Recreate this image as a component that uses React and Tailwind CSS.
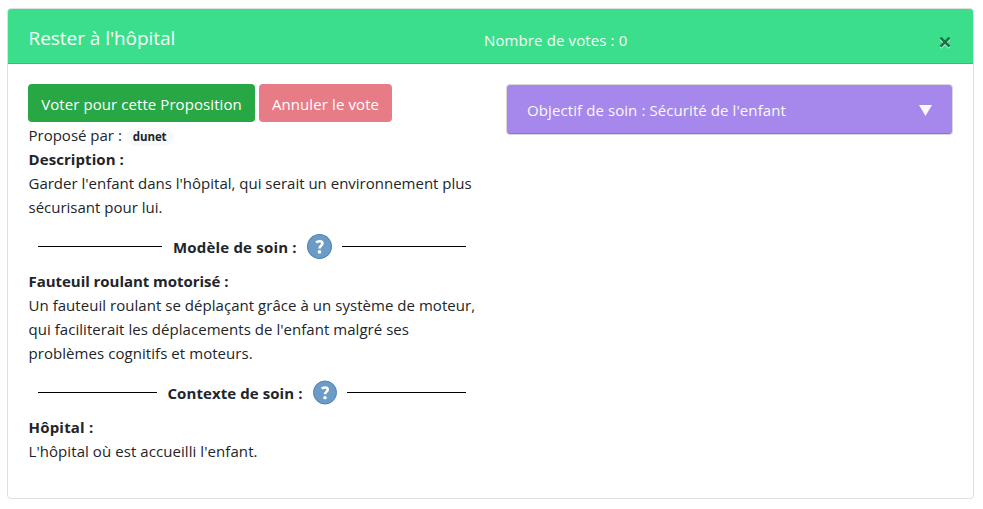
function HelpIcon({ className }) {
  return (
    <svg className={`shrink-0 ${className}`} viewBox="0 0 24 24">
      <circle cx="12" cy="12" r="11.5" fill="#6c9bc5" stroke="#4a86b8" />
      <path d="M8.7 8.2c1-1 2-1.3 3.3-1.3 1.8 0 2.8.8 2.8 2.1 0 2.4-2.8 2.1-2.8 4.8" fill="none" stroke="#fff" strokeWidth="2.5" />
      <rect x="10.4" y="15.7" width="3.2" height="3" rx="1" fill="#fff" />
    </svg>
  );
}

function Separator({ children, iconClass }) {
  return (
    <div className="flex h-[50px] items-center gap-[10px] pt-[4px] pl-[10px] pr-[9px]">
      <span className="h-px flex-1 bg-black" />
      {children}
      <HelpIcon className={iconClass} />
      <span className="h-px flex-1 bg-black" />
    </div>
  );
}

export default function App() {
  return (
    <div className="h-[509px] w-[983px] bg-white pl-[7px] pt-2 font-['Open_Sans','Noto_Sans',sans-serif] text-[15px] leading-6 text-[#212529]">
      <div className="h-[491px] w-[967px] overflow-hidden rounded-[4px] border border-[#dfdfdf]">
        <header className="flex h-[55px] items-center border-b border-[#32be78] bg-[#3bdf8b] pl-5 pr-[21px] text-[#f8f9fa]">
          <h5 className="w-[456px] pt-1 pl-[0.5px] text-[19px] tracking-[-0.05px] whitespace-nowrap">Rester à l'hôpital</h5>
          <span className="flex-1 pt-2 tracking-[0.12px] whitespace-nowrap">Nombre de votes : 0</span>
          <svg className="mt-3 h-[13px] w-[13px]" viewBox="0 0 13 13">
            <path d="M1.5 2.8l9 9M10.5 2.8l-9 9" stroke="#fff" strokeOpacity=".6" strokeWidth="2.6" />
            <path d="M1.5 1.7l9 9M10.5 1.7l-9 9" stroke="#1e7047" strokeWidth="2.6" />
          </svg>
        </header>
        <div className="flex pl-5 pt-5">
          <section className="w-[447px] whitespace-nowrap">
            <div className="mb-px flex gap-1 text-white">
              <button className="h-[38px] w-[227px] rounded-[4px] bg-[#28a745] pt-[2px] tracking-[0.08px]">Voter pour cette Proposition</button>
              <button className="h-[38px] w-[133px] rounded-[4px] bg-[#e77c87] pt-[2px] tracking-[0.1px]">Annuler le vote</button>
            </div>
            <div className="pl-[0.5px]">
              <p className="flex h-6 items-center">
                <span>Proposé par :</span>
                <span className="mt-[3px] ml-1 h-[18px] rounded-full bg-[#f8f9fa] px-[7px] text-[11.5px] leading-[18px] font-bold tracking-[-0.1px]">dunet</span>
              </p>
              <p className="font-bold tracking-[0.08px]">Description :</p>
              <p>Garder l'enfant dans l'hôpital, qui serait un environnement plus</p>
              <p>sécurisant pour lui.</p>
            </div>
            <Separator iconClass="size-[25px]"><b className="pt-[2px] pl-[0.7px] tracking-[0.2px]">Modèle de soin :</b></Separator>
            <div className="pl-[0.5px]">
              <p className="font-bold tracking-[-0.04px]">Fauteuil roulant motorisé :</p>
              <p className="tracking-[0.04px]">Un fauteuil roulant se déplaçant grâce à un système de moteur,</p>
              <p className="tracking-[0.04px]">qui faciliterait les déplacements de l'enfant malgré ses</p>
              <p className="tracking-[0.06px]">problèmes cognitifs et moteurs.</p>
            </div>
            <Separator iconClass="h-[25px] w-6"><b className="pt-[2px] tracking-[0.08px]">Contexte de soin :</b></Separator>
            <div className="pl-[0.5px]">
              <p className="font-bold tracking-[0.2px]">Hôpital :</p>
              <p className="tracking-[0.07px]">L'hôpital où est accueilli l'enfant.</p>
            </div>
          </section>
          <section className="ml-[31px] flex h-[51px] w-[447px] items-center justify-between rounded-[4px] border border-[#d8d8d8] bg-[#a688ec] pl-5 pr-5 text-[#f8f9fa] shadow-[inset_0_-1px_0_#8d74c9]">
            <span className="tracking-[0.09px]">Objectif de soin : Sécurité de l'enfant</span>
            <svg className="mt-[2px] h-[11px] w-[13px]" viewBox="0 0 13 11"><path d="M0 0h13L6.5 11z" fill="#f8f9fa" /></svg>
          </section>
        </div>
      </div>
    </div>
  );
}
